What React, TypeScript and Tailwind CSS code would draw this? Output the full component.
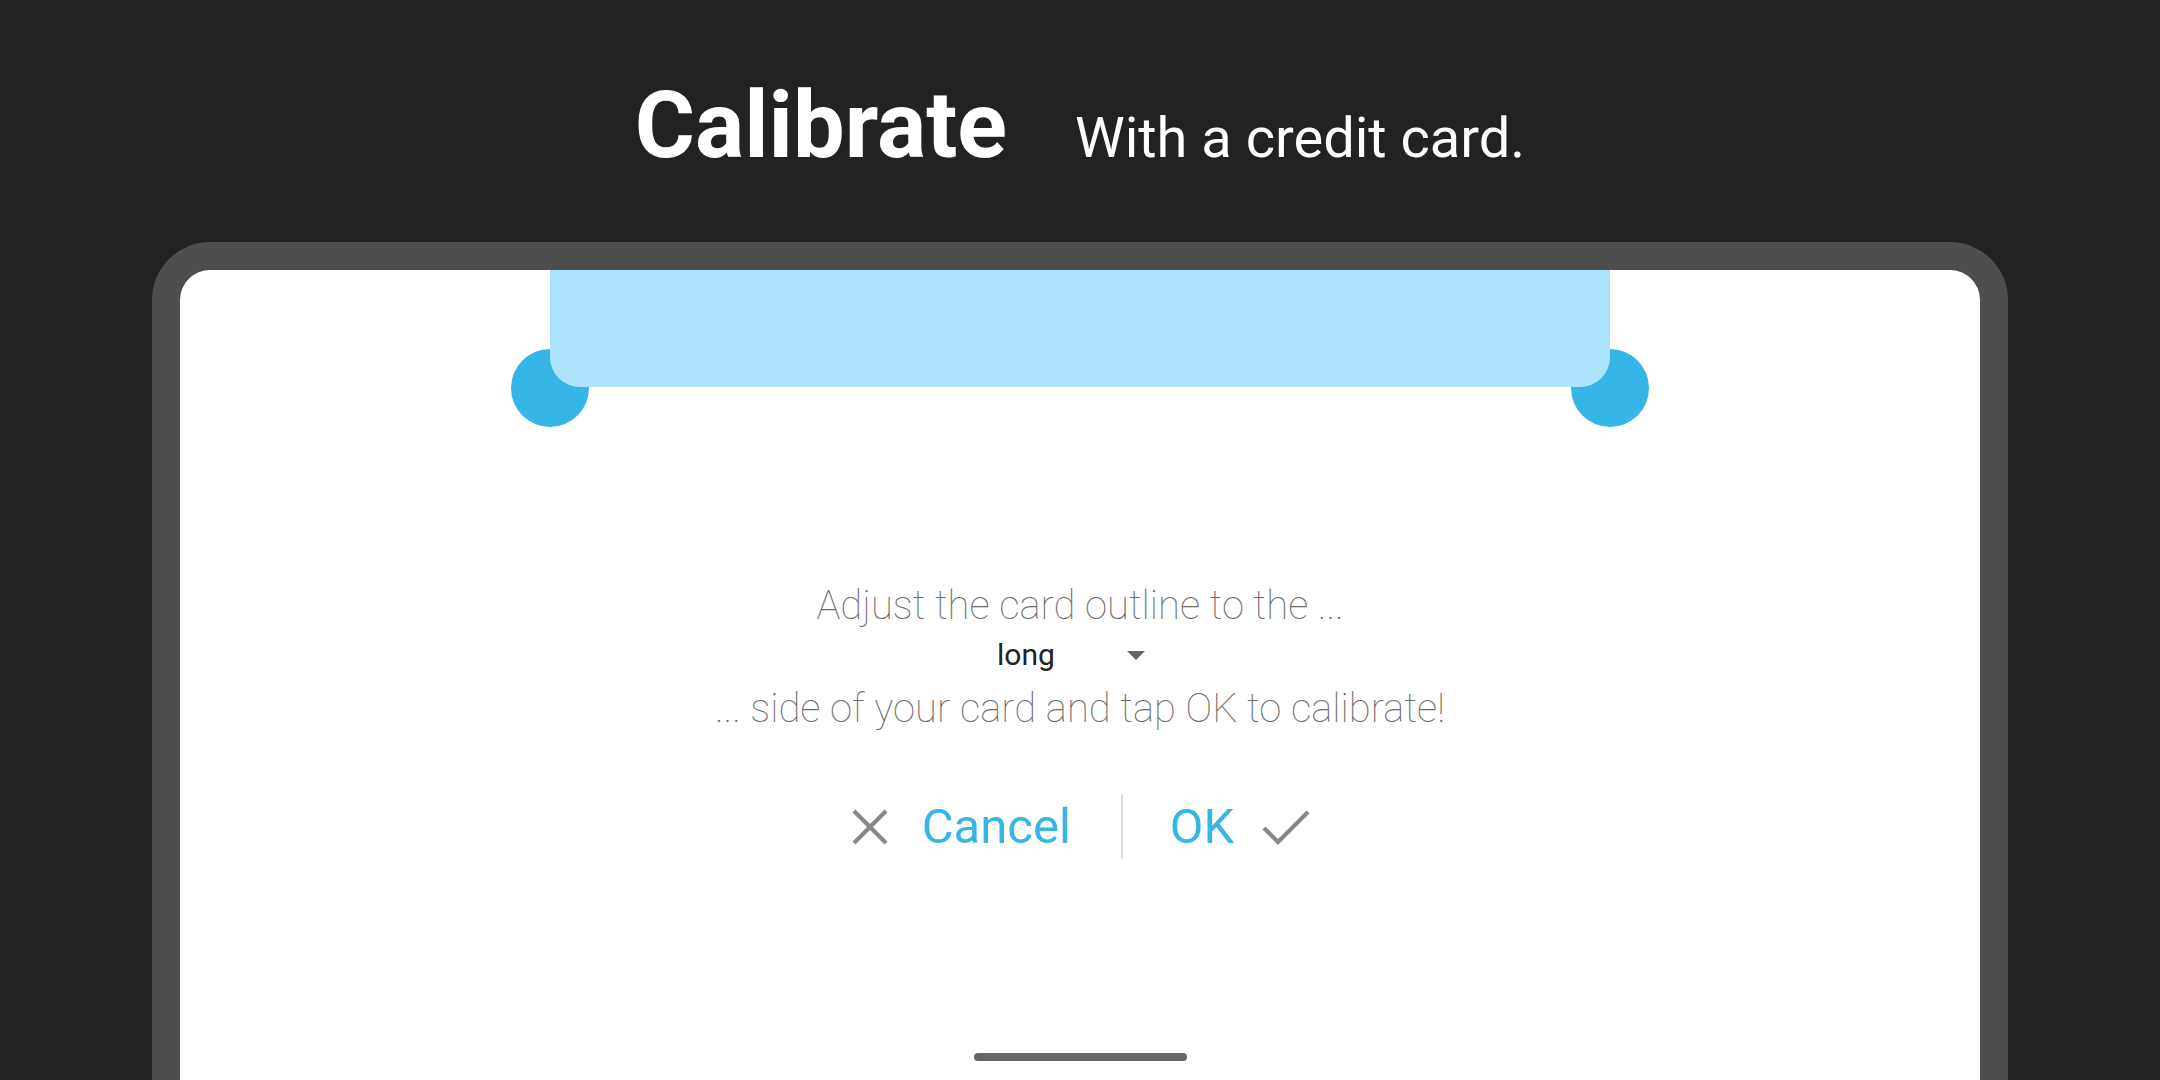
import React from 'react';

const CloseIcon: React.FC = () => (
  <svg width="36" height="36" viewBox="0 0 36 36" className="shrink-0">
    <path d="M2 2L34 34M34 2L2 34" stroke="#888888" strokeWidth="4.2" fill="none" />
  </svg>
);

const CheckIcon: React.FC = () => (
  <svg width="48" height="36" viewBox="0 0 48 36" className="shrink-0">
    <path d="M2 19L16 33L46 3" stroke="#888888" strokeWidth="4.2" fill="none" />
  </svg>
);

const CardOutline: React.FC = () => (
  <div className="relative mx-auto w-[1060px] h-[117px]">
    <div className="absolute left-[-39px] top-[79px] w-[78px] h-[78px] rounded-full bg-[#36b6e6]" />
    <div className="absolute right-[-39px] top-[79px] w-[78px] h-[78px] rounded-full bg-[#36b6e6]" />
    <div className="relative w-full h-full rounded-b-[30px] bg-[#ade4fd]" />
  </div>
);

const SideSpinner: React.FC = () => (
  <div className="flex h-[50px] items-center justify-center">
    <div className="flex items-center pr-[18px] pt-[4px]">
      <span className="text-[30px] leading-none text-[#222222]">long</span>
      <svg width="18" height="9" viewBox="0 0 18 9" className="ml-[72px]">
        <path d="M0 0H18L9 9Z" fill="#666666" />
      </svg>
    </div>
  </div>
);

export default function App() {
  return (
    <div className="h-[1080px] w-[2160px] overflow-hidden bg-[#222222] font-['Roboto',sans-serif]">
      <div className="flex h-[90px] items-baseline justify-center gap-[68px] mt-[80px]">
        <h1 className="text-[92px] leading-none font-bold text-white">Calibrate</h1>
        <span className="text-[56px] leading-none text-white">With a credit card.</span>
      </div>

      <div className="mx-[152px] mt-[72px] rounded-t-[58px] bg-[#4e4e4e] px-[28px] pt-[28px]">
        <div className="flex h-[810px] flex-col rounded-t-[30px] bg-white">
          <CardOutline />

          <div className="mt-[196px] flex flex-col items-center text-center">
            <p className="h-[45px] text-[40px] leading-[45px] font-thin text-[#6a6a6a]">
              Adjust the card outline to the ...
            </p>
            <SideSpinner />
            <p className="mt-[8px] h-[45px] text-[40px] leading-[45px] font-thin text-[#6a6a6a]">
              ... side of your card and tap OK to calibrate!
            </p>
          </div>

          <div className="mt-[63px] ml-[2px] flex h-[65px] items-center justify-center">
            <CloseIcon />
            <span className="ml-[34px] text-[49px] leading-none text-[#36b6e6]">Cancel</span>
            <div className="ml-[50px] mr-[47px] h-[65px] w-[2px] bg-[#dddddd]" />
            <span className="text-[49px] leading-none text-[#36b6e6]">OK</span>
            <div className="ml-[28px]">
              <CheckIcon />
            </div>
          </div>

          <div className="mx-auto mt-auto mb-[19px] h-[8px] w-[213px] rounded-full bg-[#666666]" />
        </div>
      </div>
    </div>
  );
}
